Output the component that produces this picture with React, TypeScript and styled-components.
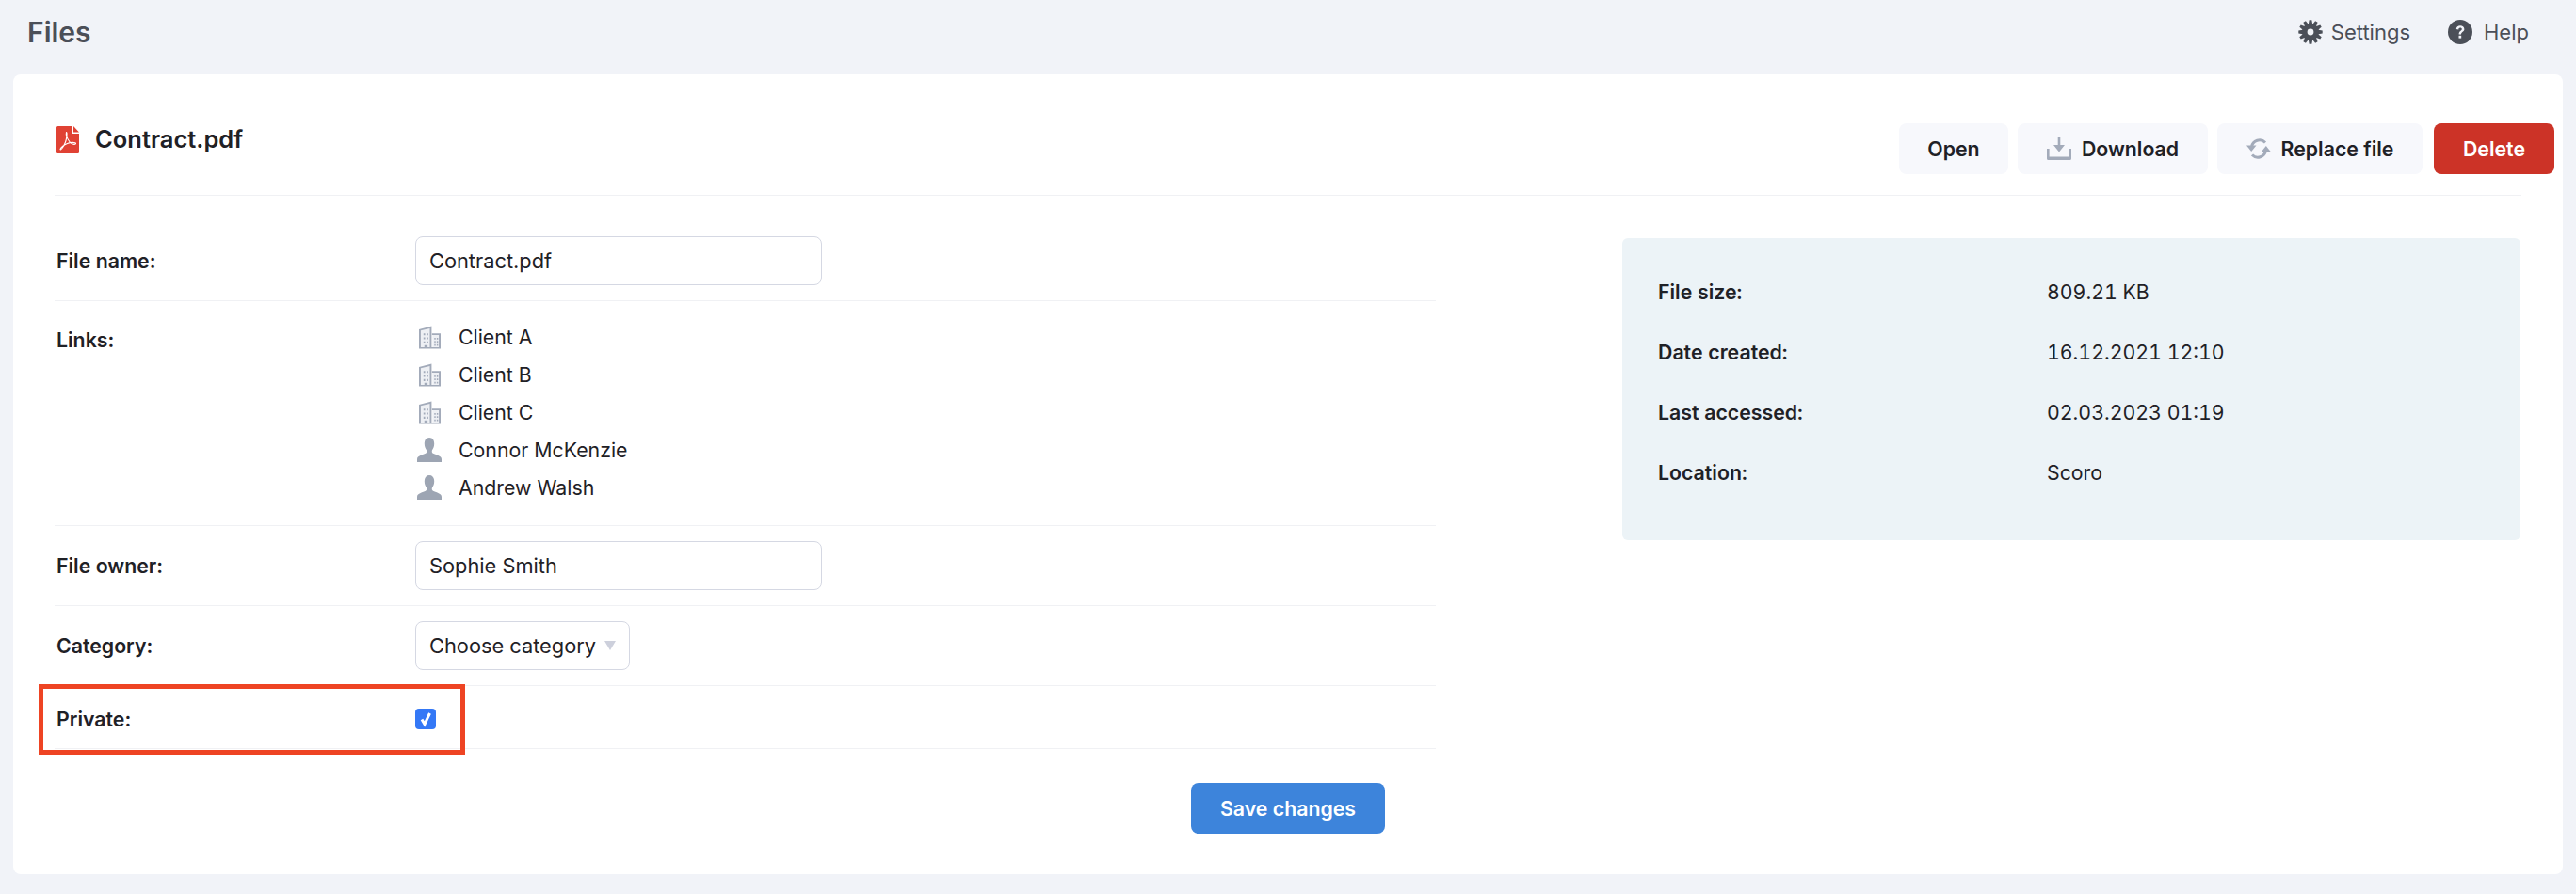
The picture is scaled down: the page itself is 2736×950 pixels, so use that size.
import React from 'react';
import styled, { createGlobalStyle } from 'styled-components';

const Global = createGlobalStyle`
  html, body { margin: 0; padding: 0; background: #f1f3f8; }
  body { font-family: Inter, "Liberation Sans", sans-serif; color: #1f2126; }
  * { box-sizing: border-box; }
`;

const Page = styled.div`
  position: relative;
  width: 2736px;
  height: 950px;
  overflow: hidden;
  padding: 0 14px;
`;

const TopBar = styled.header`
  height: 79px;
  padding: 0 15px 11px;
  display: flex;
  align-items: center;
  justify-content: space-between;
  color: #4b4f58;
`;

const PageTitle = styled.h1`
  margin: 0;
  font-size: 30px;
  font-weight: 600;
`;

const TopActions = styled.nav`
  display: flex;
  align-items: center;
  gap: 40px;
  padding-right: 21px;
`;

const TopAction = styled.span<{ $gap: number }>`
  display: flex;
  align-items: center;
  gap: ${p => p.$gap}px;
  font-size: 22px;
`;

const Card = styled.main`
  height: 850px;
  background: #fff;
  border-radius: 8px;
  padding: 0 44px;
`;

const CardHeader = styled.div`
  height: 129px;
  padding-top: 52px;
  border-bottom: 1px solid #f0f1f4;
  display: flex;
  justify-content: space-between;
  align-items: flex-start;
`;

const FileTitle = styled.div`
  display: flex;
  align-items: center;
  gap: 17px;
  padding-left: 2px;
  font-size: 25.5px;
  font-weight: 600;
  line-height: 34px;
`;

const HeaderActions = styled.div`
  display: flex;
  gap: 10px;
  margin-right: -35px;
`;

const Button = styled.button<{ $tone?: 'plain' | 'danger' | 'primary'; $w: number }>`
  width: ${p => p.$w}px;
  height: 54px;
  border: 0;
  border-radius: 8px;
  display: flex;
  align-items: center;
  justify-content: center;
  gap: 11px;
  padding: 0;
  font: 600 21.3px Inter, sans-serif;
  color: ${p => (p.$tone === 'danger' || p.$tone === 'primary' ? '#fff' : '#1f2126')};
  background: ${p =>
    p.$tone === 'danger' ? '#cc3327' : p.$tone === 'primary' ? '#3d84db' : '#f7f8fc'};
  ${p => (p.$tone === 'danger' ? 'margin-left: 2px;' : '')}
`;

const Body = styled.div`
  display: grid;
  grid-template-columns: 1467px 954px;
  column-gap: 198px;
`;

const Form = styled.section`
  padding-top: 27px;
`;

const Row = styled.div<{ $top?: number; $bottom?: number; $start?: boolean }>`
  display: grid;
  grid-template-columns: 383px 1fr;
  align-items: ${p => (p.$start ? 'start' : 'center')};
  padding: ${p => p.$top ?? 16}px 0 ${p => p.$bottom ?? 16}px;
  border-bottom: 1px solid #f0f1f4;
`;

const Label = styled.div<{ $offset?: number }>`
  padding: ${p => p.$offset ?? 0}px 0 0 2px;
  font-size: 21.3px;
  font-weight: 600;
  line-height: 26px;
`;

const TextField = styled.div`
  width: 432px;
  height: 52px;
  padding: 0 14px;
  display: flex;
  align-items: center;
  border: 1.5px solid #d5d8e3;
  border-radius: 8px;
  font-size: 21.8px;
  background: #fff;
`;

const SelectField = styled(TextField)`
  width: 228px;
  justify-content: space-between;
  padding-right: 14px;
`;

const Caret = styled.span`
  width: 0;
  height: 0;
  border-left: 6px solid transparent;
  border-right: 6px solid transparent;
  border-top: 10px solid #cdd0dc;
`;

const Links = styled.ul`
  list-style: none;
  margin: 0;
  padding: 0;
  display: flex;
  flex-direction: column;
`;

const LinkItem = styled.li`
  height: 40px;
  display: flex;
  align-items: center;
  gap: 18px;
  padding-left: 2px;
  font-size: 21.3px;
`;

const IconSlot = styled.span`
  width: 26px;
  display: flex;
  justify-content: center;
`;

const Check = styled.span`
  width: 22px;
  height: 22px;
  border-radius: 4px;
  background: #3478f6;
  display: flex;
  align-items: center;
  justify-content: center;
`;

const Actions = styled.div`
  display: flex;
  justify-content: flex-end;
  padding: 36px 54px 0 0;
`;

const Facts = styled.aside`
  margin-top: 45px;
  height: 321px;
  background: #ecf3f7;
  border-radius: 6px;
  padding: 25px 38px;
`;

const Fact = styled.div`
  height: 64px;
  display: grid;
  grid-template-columns: 413px 1fr;
  align-items: center;
  font-size: 21.3px;
  font-variant-numeric: tabular-nums;
`;

const FactLabel = styled.span`
  font-weight: 600;
`;

const Highlight = styled.div`
  position: absolute;
  left: 41px;
  top: 727px;
  width: 453px;
  height: 75px;
  border: 5px solid #ee4423;
  pointer-events: none;
`;

const PdfIcon = () => (
  <svg width="24" height="29" viewBox="0 0 24 29">
    <path d="M1.500 0H16.500V8H24V27.500a1.500 1.500 0 0 1-1.500 1.500H1.500A1.500 1.500 0 0 1 0 27.500V1.500A1.500 1.500 0 0 1 1.500 0Z" fill="#e04234" />
    <path d="M18 0L24 6.500H18Z" fill="#e04234" />
    <path
      d="M10.500 6.500C9.800 9 11.800 14 14.500 17.500C16 19.500 20.500 20 20.500 18.500C20.500 17 15 17 11.500 18.500C8 20 4 23 4 24.500C4 26 7 23.500 9.500 17C10.500 14.500 11.800 6.500 10.500 6.500Z"
      fill="none"
      stroke="#fff"
      strokeWidth="1.100"
    />
  </svg>
);

const BuildingIcon = () => (
  <svg width="23" height="25" viewBox="0 0 24 25">
    <path d="M1 4L13 1V24H1ZM15 9H23V24H15Z" fill="#eef0f4" />
    <path
      d="M0 3.500L14 0V25H12V2.700L2 5V25H0ZM14.500 8H24V25H22V10H14.500ZM0 23.500H24V25H0Z"
      fill="#a3abba"
    />
    <path
      d="M5 8h1.800v2.200H5zM8.500 8h1.800v2.200H8.500zM5 12.500h1.800v2.200H5zM8.500 12.500h1.800v2.200H8.500zM5 17h1.800v2.200H5zM8.500 17h1.800v2.200H8.500zM6 21h3.500v3H6zM17 13h1.500v1.800H17zM19.700 13h1.500v1.800H19.700zM17 16.500h1.500v1.800H17zM19.700 16.500h1.500v1.800H19.700zM17 20h1.500v1.800H17zM19.700 20h1.500v1.800H19.700z"
      fill="#a3abba"
    />
  </svg>
);

const PersonIcon = () => (
  <svg width="26" height="26" viewBox="0 0 26 26">
    <path
      d="M13 0C9.500 0 7.800 2.800 7.800 6.500C7.800 9.500 9 12 10 13.200C10.500 14.500 10.300 16 9 16.800C6.500 18.300 0 19 0 23V26H26V23C26 19 19.500 18.300 17 16.800C15.700 16 15.500 14.500 16 13.200C17 12 18.200 9.500 18.200 6.500C18.200 2.800 16.500 0 13 0Z"
      fill="#9da5b3"
    />
  </svg>
);

const GearIcon = () => {
  const teeth = Array.from({ length: 12 }, (_, i) => i * 30);
  return (
    <svg width="26" height="26" viewBox="0 0 26 26">
      <g fill="#4b4f58">
        {teeth.map(a => (
          <path key={a} d="M11.600 0.300H14.400L15.400 6H10.600Z" transform={`rotate(${a} 13 13)`} />
        ))}
      </g>
      <circle cx="13" cy="13" r="6.200" fill="none" stroke="#4b4f58" strokeWidth="5.600" />
    </svg>
  );
};

const HelpIcon = () => (
  <svg width="26" height="26" viewBox="0 0 26 26">
    <circle cx="13" cy="13" r="13" fill="#4b4f58" />
    <path
      d="M8.800 10C8.800 7.500 10.800 6.200 13 6.200C15.400 6.200 17.400 7.700 17.400 10C17.400 13 14 12.800 14 15.400H11.600C11.600 11.800 14.800 11.800 14.800 10C14.800 9.200 14 8.600 13 8.600C12 8.600 11.300 9.300 11.300 10.400Z"
      fill="#f1f3f8"
    />
    <rect x="11.500" y="16.800" width="2.700" height="2.800" fill="#f1f3f8" />
  </svg>
);

const DownloadIcon = () => (
  <svg width="26" height="24" viewBox="0 0 26 24">
    <path d="M11.700 0H14.300V8H19L13 15.500L7 8H11.700Z" fill="#a3abba" />
    <path d="M0 12H2.600V20.500H23.400V12H26V22.500a1.500 1.500 0 0 1-1.500 1.500H1.500A1.500 1.500 0 0 1 0 22.500Z" fill="#a3abba" />
  </svg>
);

const ReplaceIcon = () => (
  <svg width="26" height="22" viewBox="0 0 26 22">
    <path d="M5.500 9A8.500 8.500 0 0 1 20 4.500" fill="none" stroke="#a3abba" strokeWidth="3" />
    <path d="M20.500 13A8.500 8.500 0 0 1 6 17.500" fill="none" stroke="#a3abba" strokeWidth="3" />
    <path d="M0 7.500H10.500L5.200 14Z" fill="#a3abba" />
    <path d="M26 14.500H15.500L20.800 8Z" fill="#a3abba" />
  </svg>
);

const CheckMark = () => (
  <svg width="16" height="18" viewBox="0 0 16 18">
    <path d="M4 9.500L7 14.500L12.500 3" fill="none" stroke="#fff" strokeWidth="3" />
  </svg>
);

const links = [
  { name: 'Client A', Icon: BuildingIcon },
  { name: 'Client B', Icon: BuildingIcon },
  { name: 'Client C', Icon: BuildingIcon },
  { name: 'Connor McKenzie', Icon: PersonIcon },
  { name: 'Andrew Walsh', Icon: PersonIcon },
];

const facts = [
  ['File size:', '809.21 KB'],
  ['Date created:', '16.12.2021 12:10'],
  ['Last accessed:', '02.03.2023 01:19'],
  ['Location:', 'Scoro'],
];

export default function App() {
  return (
    <Page>
      <Global />
      <TopBar>
        <PageTitle>Files</PageTitle>
        <TopActions>
          <TopAction $gap={9}><GearIcon />Settings</TopAction>
          <TopAction $gap={12}><HelpIcon />Help</TopAction>
        </TopActions>
      </TopBar>
      <Card>
        <CardHeader>
          <FileTitle><PdfIcon />Contract.pdf</FileTitle>
          <HeaderActions>
            <Button $w={116}>Open</Button>
            <Button $w={202}><DownloadIcon />Download</Button>
            <Button $w={218}><ReplaceIcon />Replace file</Button>
            <Button $w={128} $tone="danger">Delete</Button>
          </HeaderActions>
        </CardHeader>
        <Body>
          <Form>
            <Row>
              <Label>File name:</Label>
              <TextField>Contract.pdf</TextField>
            </Row>
            <Row $top={18} $bottom={20} $start>
              <Label $offset={10}>Links:</Label>
              <Links>
                {links.map(({ name, Icon }) => (
                  <LinkItem key={name}>
                    <IconSlot><Icon /></IconSlot>
                    {name}
                  </LinkItem>
                ))}
              </Links>
            </Row>
            <Row>
              <Label>File owner:</Label>
              <TextField>Sophie Smith</TextField>
            </Row>
            <Row>
              <Label>Category:</Label>
              <SelectField>Choose category<Caret /></SelectField>
            </Row>
            <Row $top={22} $bottom={18}>
              <Label>Private:</Label>
              <Check><CheckMark /></Check>
            </Row>
            <Actions>
              <Button $w={206} $tone="primary">Save changes</Button>
            </Actions>
          </Form>
          <Facts>
            {facts.map(([k, v]) => (
              <Fact key={k}>
                <FactLabel>{k}</FactLabel>
                <span>{v}</span>
              </Fact>
            ))}
          </Facts>
        </Body>
      </Card>
      <Highlight />
    </Page>
  );
}
